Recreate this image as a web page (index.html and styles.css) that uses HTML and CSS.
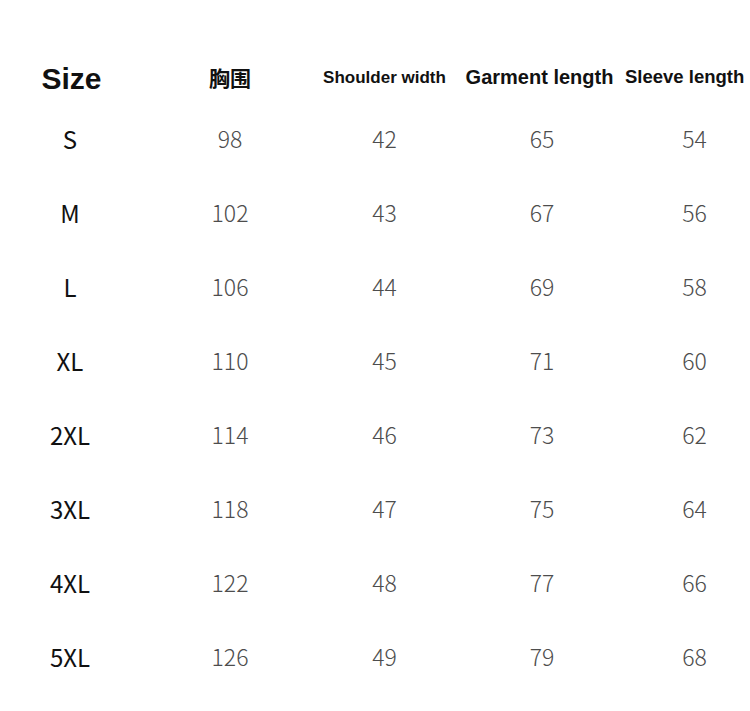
FILE: index.html
```html
<!DOCTYPE html>
<html lang="zh">
<head>
<meta charset="utf-8">
<title>Size chart</title>
<link rel="stylesheet" href="styles.css">
</head>
<body>
<div class="chart">
  <div class="hd hd-size">Size</div>
  <div class="hd hd-cn">胸围</div>
  <div class="hd hd-shoulder">Shoulder width</div>
  <div class="hd hd-garment">Garment length</div>
  <div class="hd hd-sleeve">Sleeve length</div>

  <div class="sz">S</div><div class="num">98</div><div class="num">42</div><div class="num">65</div><div class="num">54</div>
  <div class="sz">M</div><div class="num">102</div><div class="num">43</div><div class="num">67</div><div class="num">56</div>
  <div class="sz">L</div><div class="num">106</div><div class="num">44</div><div class="num">69</div><div class="num">58</div>
  <div class="sz">XL</div><div class="num">110</div><div class="num">45</div><div class="num">71</div><div class="num">60</div>
  <div class="sz">2XL</div><div class="num">114</div><div class="num">46</div><div class="num">73</div><div class="num">62</div>
  <div class="sz">3XL</div><div class="num">118</div><div class="num">47</div><div class="num">75</div><div class="num">64</div>
  <div class="sz">4XL</div><div class="num">122</div><div class="num">48</div><div class="num">77</div><div class="num">66</div>
  <div class="sz">5XL</div><div class="num">126</div><div class="num">49</div><div class="num">79</div><div class="num">68</div>
</div>
</body>
</html>
```
FILE: styles.css
```css
html, body {
  margin: 0;
  padding: 0;
  background: #ffffff;
  overflow: hidden;
}

.chart {
  display: grid;
  grid-template-columns: 140px 180px 129px 186px 119px;
  grid-template-rows: 50px;
  grid-auto-rows: 74px;
  align-items: center;
  padding-top: 51px;
  width: 754px;
}

.hd {
  font-family: "Liberation Sans", Arial, sans-serif;
  font-weight: bold;
  color: #111111;
  text-align: center;
  white-space: nowrap;
}

.hd-size {
  font-size: 30px;
  padding-left: 3px;
  padding-top: 6px;
}

.hd-cn {
  font-family: "Noto Sans CJK SC", sans-serif;
  font-size: 21px;
  font-weight: 700;
  padding-top: 2px;
}

.hd-shoulder {
  font-size: 17px;
  padding-top: 4px;
}

.hd-garment {
  font-size: 20px;
  padding-top: 2px;
  margin-left: -5px;
}

.hd-sleeve {
  font-size: 18.5px;
  text-align: left;
  margin-left: -10px;
  padding-top: 2px;
}

.sz {
  font-family: "Noto Sans CJK SC", "Noto Sans", sans-serif;
  font-size: 24px;
  font-weight: 400;
  color: #111111;
  text-align: center;
}

.num {
  font-family: "Noto Sans CJK SC", "Noto Sans", sans-serif;
  font-size: 23px;
  font-weight: 300;
  color: #4d4d4d;
  text-align: center;
}
```
